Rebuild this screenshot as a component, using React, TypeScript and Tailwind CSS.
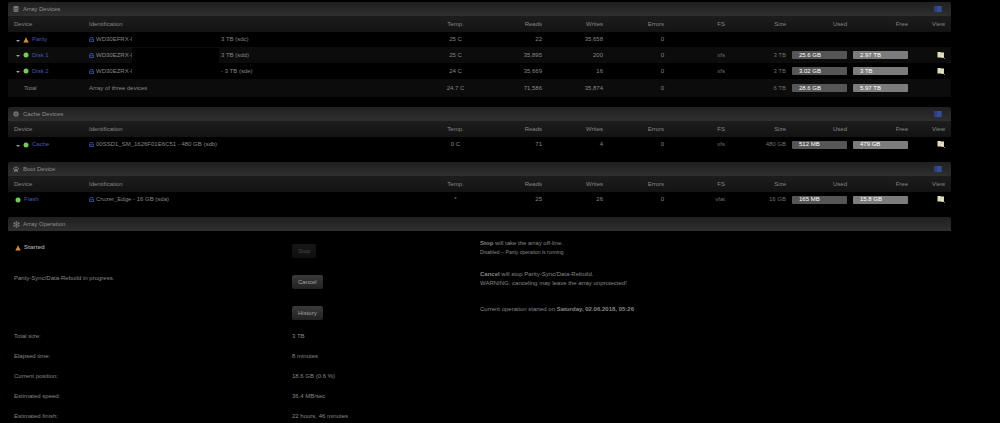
import type { ReactNode } from 'react'
import { FaDatabase, FaPaw, FaRegSnowflake } from 'react-icons/fa'
import clsx from 'clsx'

type Device = {
  name: string
  status?: 'ok' | 'warn'
  expandable?: boolean
  id: string
  idTail?: string
  temp: string
  reads: string
  writes: string
  errors: string
  fs?: string
  size?: string
  used?: string
  free?: string
  view?: boolean
}

const arrayDevices: Device[] = [
  { name: 'Parity', status: 'warn', expandable: true, id: 'WD30EFRX-I', idTail: '3 TB (sdc)', temp: '25 C', reads: '22', writes: '35,658', errors: '0' },
  { name: 'Disk 1', status: 'ok', expandable: true, id: 'WD30EZRX-I', idTail: '3 TB (sdd)', temp: '25 C', reads: '35,895', writes: '200', errors: '0', fs: 'xfs', size: '3 TB', used: '25.6 GB', free: '2.97 TB', view: true },
  { name: 'Disk 2', status: 'ok', expandable: true, id: 'WD30EZRX-I', idTail: '- 3 TB (sde)', temp: '24 C', reads: '35,669', writes: '16', errors: '0', fs: 'xfs', size: '3 TB', used: '3.02 GB', free: '3 TB', view: true },
  { name: 'Total', id: 'Array of three devices', temp: '24.7 C', reads: '71,586', writes: '35,874', errors: '0', size: '6 TB', used: '28.6 GB', free: '5.97 TB' },
]

const cacheDevices: Device[] = [
  { name: 'Cache', status: 'ok', expandable: true, id: '00SSD1_SM_1626F01E6C51 - 480 GB (sdb)', temp: '0 C', reads: '71', writes: '4', errors: '0', fs: 'xfs', size: '480 GB', used: '512 MB', free: '479 GB', view: true },
]

const bootDevices: Device[] = [
  { name: 'Flash', status: 'ok', id: 'Cruzer_Edge - 16 GB (sda)', temp: '*', reads: '25', writes: '26', errors: '0', fs: 'vfat', size: '16 GB', used: '165 MB', free: '15.8 GB', view: true },
]

const progress = [
  ['Total size:', '3 TB'],
  ['Elapsed time:', '8 minutes'],
  ['Current position:', '18.6 GB (0.6 %)'],
  ['Estimated speed:', '36.4 MB/sec'],
  ['Estimated finish:', '22 hours, 46 minutes'],
]

function StatusIcon({ status }: { status: 'ok' | 'warn' }) {
  return (
    <svg viewBox="0 0 12 12" className="size-[6px] shrink-0">
      {status === 'ok' ? (
        <circle cx="6" cy="6" r="5" fill="#6fce55" />
      ) : (
        <path d="M6 0 L8 5 L11.5 11 H0.5 L4 5 Z" fill="#d98f35" />
      )}
    </svg>
  )
}

function ChevronIcon() {
  return (
    <svg viewBox="0 0 8 8" className="size-[4px]">
      <path d="M0 4 L4 8 L8 4 Z" fill="#a0a0a0" />
    </svg>
  )
}

function DriveIcon() {
  return (
    <svg viewBox="0 0 10 10" className="mr-[2px] size-[5px] shrink-0" fill="none" stroke="#3f55b0" strokeWidth="1.5">
      <path d="M1 5.5 L2.5 1 H7.5 L9 5.5 V9 H1 Z M1 5.5 H9" />
    </svg>
  )
}

function CacheIcon() {
  return (
    <svg viewBox="0 0 12 12" className="size-[6px]">
      <circle cx="6" cy="6" r="5.5" fill="#6c6c6c" />
      <circle cx="6" cy="6" r="2" fill="#4c4c4c" />
    </svg>
  )
}

function ListIcon() {
  return (
    <svg viewBox="0 0 16 12" className="h-[6px] w-[8px]">
      <rect width="16" height="12" fill="#24356c" />
      <path d="M1 2 H3 M5 2 H15 M1 6 H3 M5 6 H15 M1 10 H3 M5 10 H15" stroke="#4463bd" strokeWidth="2" />
    </svg>
  )
}

function BrowseIcon() {
  return (
    <svg viewBox="0 0 16 14" className="h-[7px] w-[8px]">
      <path d="M1 0 H7 L8 1 H14 V11 H1 Z" fill="#e6dfb4" />
      <circle cx="10" cy="8" r="3" fill="#f6f3e4" stroke="#b5b09a" />
      <path d="M12 10 L15 13" stroke="#dcdcdc" strokeWidth="2" />
    </svg>
  )
}

function TitleBar({ icon, title, listLink }: { icon: ReactNode; title: string; listLink?: boolean }) {
  return (
    <div className="flex h-[14px] items-center rounded-t-[2px] bg-linear-to-b from-[#202020] to-[#2f2f2f] pr-[9px] pl-[5px] text-[#8e8e8e]">
      <span className="flex w-[10px] text-[#7c7c7c]">{icon}</span>
      <h2 className="flex-1">{title}</h2>
      {listLink && (
        <a href="#" aria-label={`${title} view`}>
          <ListIcon />
        </a>
      )}
    </div>
  )
}

function Usage({ value, className }: { value: string; className: string }) {
  return <div className={clsx('flex h-[8px] items-center rounded-[1px] pl-[7px] text-white', className)}>{value}</div>
}

function DeviceTable({ icon, title, devices }: { icon: ReactNode; title: string; devices: Device[] }) {
  return (
    <section>
      <TitleBar icon={icon} title={title} listLink />
      <table className="w-full table-fixed text-right whitespace-nowrap [&_td]:p-0 [&_td]:pr-[6px] [&_th]:p-0 [&_th]:pr-[6px] [&_th]:font-normal">
        <thead>
          <tr className="h-[16px] bg-linear-to-b from-[#1d1d1d] to-[#131313] text-[#868686]">
            <th className="w-[75px] text-left"><span className="pl-[6px]">Device</span></th>
            <th className="text-left"><span className="pl-[6px]">Identification</span></th>
            <th className="w-[61px] text-center">Temp.</th>
            <th className="w-[59px]">Reads</th>
            <th className="w-[61px]">Writes</th>
            <th className="w-[61px]">Errors</th>
            <th className="w-[61px]">FS</th>
            <th className="w-[61px]">Size</th>
            <th className="w-[61px]">Used</th>
            <th className="w-[61px]">Free</th>
            <th className="w-[37px]">View</th>
          </tr>
        </thead>
        <tbody>
          {devices.map((d) => (
            <tr key={d.name} className="h-[16px] first:h-[15px] even:bg-[#0c0c0c] [&:nth-child(4)]:h-[18px]">
              <td>
                <div className={clsx('flex items-center gap-[3px]', d.expandable ? 'pl-[8px]' : d.status ? 'pl-[7px]' : 'pl-[16px]')}>
                  {d.expandable && <ChevronIcon />}
                  {d.status && <StatusIcon status={d.status} />}
                  {d.status ? <a href="#" className="text-[#4258b0]">{d.name}</a> : d.name}
                </div>
              </td>
              <td>
                <div className="flex items-center pl-[6px]">
                  {d.status && <DriveIcon />}
                  <span className={clsx(d.idTail && 'w-[36px] overflow-hidden')}>{d.id}</span>
                  {d.idTail && <span className="mr-[2px] h-[15px] w-[87px] bg-black" />}
                  {d.idTail}
                </div>
              </td>
              <td className="text-center">{d.temp}</td>
              <td>{d.reads}</td>
              <td>{d.writes}</td>
              <td>{d.errors}</td>
              <td className="text-[#707070]">{d.fs}</td>
              <td className="text-[#707070]">{d.size}</td>
              <td>{d.used && <Usage value={d.used} className="bg-[#565656]" />}</td>
              <td>{d.free && <Usage value={d.free} className="bg-[#7c7c7c]" />}</td>
              <td>
                {d.view && (
                  <a href="#" aria-label={`Browse ${d.name}`} className="flex justify-end">
                    <BrowseIcon />
                  </a>
                )}
              </td>
            </tr>
          ))}
        </tbody>
      </table>
    </section>
  )
}

function ActionButton({ children, disabled }: { children: ReactNode; disabled?: boolean }) {
  return (
    <button
      type="button"
      disabled={disabled}
      className="h-[14px] rounded-[2px] bg-linear-to-b from-[#3a3a3a] to-[#222222] px-[6px] text-[#a0a0a0] disabled:from-[#171717] disabled:to-[#101010] disabled:text-[#4a4a4a]"
    >
      {children}
    </button>
  )
}

function OperationRow({ label, action, children }: { label?: ReactNode; action: ReactNode; children: ReactNode }) {
  return (
    <div className="grid h-[31px] grid-cols-[278px_188px_1fr] items-start">
      <div className="pt-[4px]">{label}</div>
      <div className="pt-[5px]">{action}</div>
      <div>{children}</div>
    </div>
  )
}

export default function App() {
  return (
    <main className="min-h-screen bg-black pt-[2px] pr-[49px] pl-[8px] font-['Liberation_Sans',Arial,sans-serif] text-[6px] leading-[9px] text-[#868686]">
      <div className="flex flex-col gap-[10px]">
        <DeviceTable icon={<FaDatabase className="size-[6px]" />} title="Array Devices" devices={arrayDevices} />
        <DeviceTable icon={<CacheIcon />} title="Cache Devices" devices={cacheDevices} />
        <DeviceTable icon={<FaPaw className="size-[6px]" />} title="Boot Device" devices={bootDevices} />
        <section>
          <TitleBar icon={<FaRegSnowflake className="size-[7px]" />} title="Array Operation" />
          <div className="pt-[8px] pl-[6px]">
            <OperationRow
              label={
                <div className="flex items-center gap-[3px] pl-[1px] font-bold text-[#9a9a9a]">
                  <StatusIcon status="warn" />
                  Started
                </div>
              }
              action={<ActionButton disabled>Stop</ActionButton>}
            >
              <p><b>Stop</b> will take the array off-line.</p>
              <p className="text-[5px]">Disabled -- Parity operation is running</p>
            </OperationRow>
            <OperationRow label="Parity-Sync/Data-Rebuild in progress." action={<ActionButton>Cancel</ActionButton>}>
              <p><b>Cancel</b> will stop Parity-Sync/Data-Rebuild.</p>
              <p>WARNING: canceling may leave the array unprotected!</p>
            </OperationRow>
            <OperationRow action={<ActionButton>History</ActionButton>}>
              <p className="pt-[4px]">Current operation started on <b>Saturday, 02.06.2018, 05:26</b></p>
            </OperationRow>
            <dl className="grid grid-cols-[278px_1fr] gap-y-[11px]">
              {progress.map(([label, value]) => (
                <div key={label} className="contents">
                  <dt>{label}</dt>
                  <dd>{value}</dd>
                </div>
              ))}
            </dl>
          </div>
        </section>
      </div>
    </main>
  )
}
